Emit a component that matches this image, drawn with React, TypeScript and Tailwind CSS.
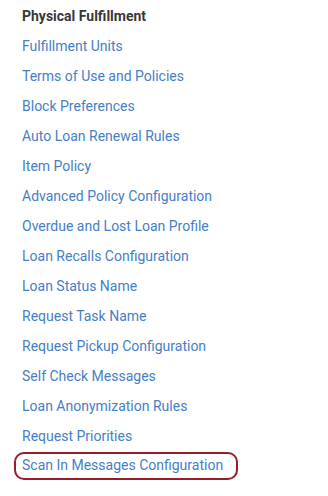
import React from "react";

const items = [
  "Fulfillment Units",
  "Terms of Use and Policies",
  "Block Preferences",
  "Auto Loan Renewal Rules",
  "Item Policy",
  "Advanced Policy Configuration",
  "Overdue and Lost Loan Profile",
  "Loan Recalls Configuration",
  "Loan Status Name",
  "Request Task Name",
  "Request Pickup Configuration",
  "Self Check Messages",
  "Loan Anonymization Rules",
  "Request Priorities",
];

export default function App() {
  return (
    <div
      className="w-[328px] h-[496px] bg-white pl-[22px] pt-[1px] text-[14px]"
      style={{ fontFamily: "Roboto, 'Liberation Sans', sans-serif" }}
    >
      <div className="leading-[30px] font-bold text-[#383838]">Physical Fulfillment</div>
      {items.map((t) => (
        <div key={t} className="leading-[30px] text-[#4580c6]">
          {t}
        </div>
      ))}
      <div className="h-[30px] pt-[1px]">
        <div className="inline-block ml-[-8px] pl-[6px] pr-[12.5px] h-[28px] leading-[23.5px] border-[2.5px] border-[#9b1b2b] rounded-[10px] text-[#4580c6]">
          Scan In Messages Configuration
        </div>
      </div>
    </div>
  );
}
